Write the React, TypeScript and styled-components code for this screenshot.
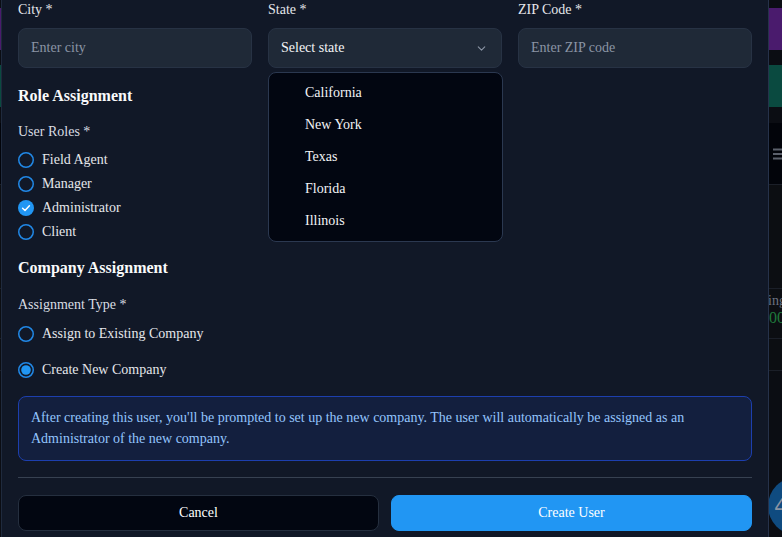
import React from "react";
import styled, { createGlobalStyle } from "styled-components";

const Global = createGlobalStyle`
  html, body { margin: 0; padding: 0; background: #0b0d13; }
  body { width: 782px; height: 537px; overflow: hidden; font-family: "Liberation Serif", "Times New Roman", serif; }
  * { box-sizing: border-box; }
`;

/* ---------- background app (behind the dialog) ---------- */
const AppBg = styled.div`
  position: relative;
  width: 782px;
  height: 537px;
  display: flex;
  flex-direction: column;
  background: #0b0d13;
  overflow: hidden;
`;
const Band = styled.div<{ $h: number; $bg: string; $mt?: number }>`
  height: ${(p) => p.$h}px;
  margin-top: ${(p) => p.$mt ?? 0}px;
  background: ${(p) => p.$bg};
  flex: none;
`;
const Toolbar = styled.div`
  height: 62px;
  margin-top: 16px;
  background: #02040a;
  border-bottom: 1px solid #1b1f28;
  display: flex;
  justify-content: flex-end;
  align-items: center;
  color: #5b606b;
`;
const Panel = styled.div`
  height: 104px;
  background: #0c0e12;
  border-bottom: 1px solid #1b1f28;
`;
const StatRow = styled.div`
  height: 50px;
  background: #0c0e12;
  border-bottom: 1px solid #1b1f28;
  display: flex;
  flex-direction: column;
  align-items: flex-end;
  padding-top: 3px;
  font-size: 14px;
  line-height: 17px;
`;
const StatLabel = styled.span`
  color: #6b7280;
  margin-right: -4px;
`;
const StatValue = styled.span`
  color: #1f7a3c;
  font-size: 16px;
  margin-right: -3px;
`;
const Row = styled.div`
  height: 32px;
  background: #0c0e12;
  border-bottom: 1px solid #1b1f28;
`;
const Fab = styled.div`
  position: absolute;
  left: 768px;
  top: 477px;
  width: 58px;
  height: 58px;
  border-radius: 50%;
  background: #0f4b80;
  color: #8a94a3;
  font-size: 22px;
  display: flex;
  align-items: center;
  padding-left: 6px;
  font-family: "DejaVu Sans", sans-serif;
`;

/* ---------- dialog ---------- */
const Dialog = styled.div`
  position: absolute;
  left: 1px;
  top: 0;
  width: 768px;
  height: 537px;
  background: #111827;
  border-left: 1px solid #1f2a3d;
  border-right: 1px solid #26324a;
  padding: 0 16px;
  display: flex;
  flex-direction: column;
  color: #e5e7eb;
`;
const AddressGrid = styled.div`
  display: grid;
  grid-template-columns: repeat(3, 1fr);
  gap: 16px;
`;
const Field = styled.div`
  position: relative;
  display: flex;
  flex-direction: column;
  gap: 8px;
`;
const Label = styled.label`
  font-size: 14px;
  line-height: 20px;
  color: #e5e7eb;
`;
const Input = styled.input`
  height: 40px;
  width: 100%;
  border-radius: 8px;
  border: 1px solid #273244;
  background: #1f2937;
  padding: 0 12px;
  font-family: inherit;
  font-size: 14px;
  color: #e5e7eb;
  outline: none;
  &::placeholder { color: #8b95a5; }
`;
const SelectTrigger = styled.button`
  height: 40px;
  width: 100%;
  border-radius: 8px;
  border: 1px solid #273244;
  background: #1f2937;
  padding: 0 13px 0 12px;
  font-family: inherit;
  font-size: 14px;
  color: #f3f4f6;
  display: flex;
  align-items: center;
  justify-content: space-between;
`;
const Menu = styled.div`
  position: absolute;
  top: 72px;
  left: 0;
  width: 235px;
  padding: 4px;
  background: #020611;
  border: 1px solid #2b3850;
  border-radius: 8px;
  z-index: 5;
`;
const MenuItem = styled.div`
  height: 32px;
  padding-left: 32px;
  display: flex;
  align-items: center;
  font-size: 14px;
  color: #f3f4f6;
`;
const SectionTitle = styled.h3<{ $mt: number }>`
  margin: ${(p) => p.$mt}px 0 0;
  font-size: 16px;
  line-height: 24px;
  font-weight: 700;
  color: #f9fafb;
`;
const GroupLabel = styled(Label)<{ $mt: number }>`
  margin-top: ${(p) => p.$mt}px;
  color: #d9dde3;
`;
const OptionList = styled.div<{ $gap: number; $mt: number }>`
  display: flex;
  flex-direction: column;
  gap: ${(p) => p.$gap}px;
  margin-top: ${(p) => p.$mt}px;
`;
const Option = styled.div`
  display: flex;
  align-items: center;
  gap: 8px;
  height: 20px;
  font-size: 14px;
  color: #e5e7eb;
`;
const InfoBox = styled.div`
  margin-top: 16px;
  border: 1px solid #1d3fae;
  background: #131f3e;
  border-radius: 8px;
  padding: 10px 12px 11px;
  font-size: 14px;
  line-height: 21px;
  color: #93c5fd;
`;
const Divider = styled.hr`
  margin: 16px 0 0;
  border: none;
  border-top: 1px solid #374151;
`;
const Actions = styled.div`
  display: grid;
  grid-template-columns: 1fr 1fr;
  gap: 12px;
  margin-top: 17px;
`;
const Button = styled.button<{ $primary?: boolean }>`
  height: 36px;
  border-radius: 8px;
  font-family: inherit;
  font-size: 14px;
  color: #ffffff;
  background: ${(p) => (p.$primary ? "#2196f3" : "#020611")};
  border: 1px solid ${(p) => (p.$primary ? "#2196f3" : "#252f3f")};
`;

const Chevron = () => (
  <svg width="13" height="13" viewBox="0 0 24 24" fill="none" stroke="#8b95a5" strokeWidth="2" strokeLinecap="round" strokeLinejoin="round">
    <path d="m6 9 6 6 6-6" />
  </svg>
);

const CheckCircle = ({ checked }: { checked?: boolean }) =>
  checked ? (
    <svg width="16" height="16" viewBox="0 0 16 16">
      <circle cx="8" cy="8" r="8" fill="#2196f3" />
      <path d="M4.6 8.3 7 10.5 11.4 5.8" fill="none" stroke="#fff" strokeWidth="1.5" strokeLinecap="round" strokeLinejoin="round" />
    </svg>
  ) : (
    <svg width="16" height="16" viewBox="0 0 16 16">
      <circle cx="8" cy="8" r="7.25" fill="none" stroke="#2188e6" strokeWidth="1.5" />
    </svg>
  );

const Radio = ({ checked }: { checked?: boolean }) => (
  <svg width="16" height="16" viewBox="0 0 16 16">
    <circle cx="8" cy="8" r="7.25" fill="none" stroke="#2188e6" strokeWidth="1.5" />
    {checked && <circle cx="8" cy="8" r="4.8" fill="#2196f3" />}
  </svg>
);

const Hamburger = () => (
  <svg width="14" height="14" viewBox="0 0 14 14" style={{ marginRight: -4 }}>
    <path d="M1 2.5h13M1 7h13M1 11.5h13" stroke="#5b606b" strokeWidth="2" />
  </svg>
);

const roles = [
  { name: "Field Agent" },
  { name: "Manager" },
  { name: "Administrator", checked: true },
  { name: "Client" },
];
const states = ["California", "New York", "Texas", "Florida", "Illinois"];

export default function App() {
  return (
    <>
      <Global />
      <AppBg>
        <Band $h={42} $bg="#4a1b6d" $mt={8} />
        <Band $h={42} $bg="#0a4a40" $mt={15} />
        <Toolbar>
          <Hamburger />
        </Toolbar>
        <Panel />
        <StatRow>
          <StatLabel>ing</StatLabel>
          <StatValue>00</StatValue>
        </StatRow>
        <Row />
        <Fab>4</Fab>

        <Dialog>
          <AddressGrid>
            <Field>
              <Label>City *</Label>
              <Input placeholder="Enter city" />
            </Field>
            <Field>
              <Label>State *</Label>
              <SelectTrigger>
                <span>Select state</span>
                <Chevron />
              </SelectTrigger>
              <Menu>
                {states.map((s) => (
                  <MenuItem key={s}>{s}</MenuItem>
                ))}
              </Menu>
            </Field>
            <Field>
              <Label>ZIP Code *</Label>
              <Input placeholder="Enter ZIP code" />
            </Field>
          </AddressGrid>

          <SectionTitle $mt={16}>Role Assignment</SectionTitle>
          <GroupLabel $mt={14}>User Roles *</GroupLabel>
          <OptionList $gap={4} $mt={8}>
            {roles.map((r) => (
              <Option key={r.name}>
                <CheckCircle checked={r.checked} />
                {r.name}
              </Option>
            ))}
          </OptionList>

          <SectionTitle $mt={14}>Company Assignment</SectionTitle>
          <GroupLabel $mt={15}>Assignment Type *</GroupLabel>
          <OptionList $gap={16} $mt={9}>
            <Option>
              <Radio />
              Assign to Existing Company
            </Option>
            <Option>
              <Radio checked />
              Create New Company
            </Option>
          </OptionList>

          <InfoBox>
            After creating this user, you'll be prompted to set up the new company. The user will automatically be assigned as an Administrator of the new company.
          </InfoBox>
          <Divider />
          <Actions>
            <Button>Cancel</Button>
            <Button $primary>Create User</Button>
          </Actions>
        </Dialog>
      </AppBg>
    </>
  );
}
